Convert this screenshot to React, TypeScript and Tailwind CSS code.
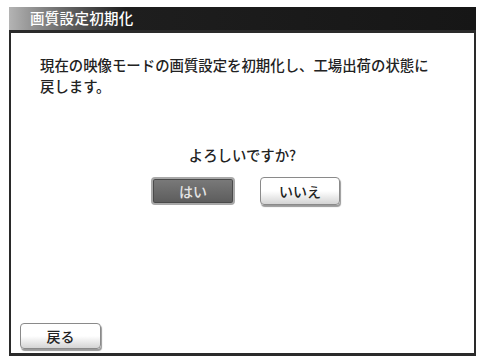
import React from 'react';

const font = { fontFamily: '"Noto Sans CJK JP", "Noto Sans", sans-serif' };

const App = () => {
  return (
    <div className="w-[479px] h-[359px] bg-white pt-[7px] pl-[9px]" style={font}>
      <div className="w-[467px] h-[23px] flex items-center pl-[21px] bg-gradient-to-r from-[#b4b4b4] via-[#1e1e1e] via-[25%] to-[#161616]">
        <span className="text-white text-[14.5px] leading-none tracking-[0.3px] font-medium">画質設定初期化</span>
      </div>
      <div className="w-[467px] h-[326px] border-2 border-[#2a2a2a] border-t-[3px] border-b-[3px] flex flex-col">
        <p className="mt-[21px] ml-[29px] text-[14.4px] leading-[21px] text-[#222] font-medium">
          現在の映像モードの画質設定を初期化し、工場出荷の状態に
          <br />
          戻します。
        </p>
        <p className="mt-[52px] text-center text-[14.4px] leading-none text-[#222] font-medium">よろしいですか?</p>
        <div className="mt-[15px] flex pl-[140px] gap-[25px]">
          <div className="w-[84px] h-[28px] rounded-[4px] border-2 border-[#a8a8a8] bg-gradient-to-b from-[#7a7a7a] to-[#5c5c5c] shadow-[inset_0_0_0_1px_#4a4a4a] flex items-center justify-center text-[#e4e4e4] text-[14px] font-medium">
            はい
          </div>
          <div className="w-[80px] h-[28px] rounded-[4px] border border-[#8a8a8a] bg-gradient-to-b from-white via-white to-[#d4d4d4] shadow-[1px_2px_1px_#9a9a9a] flex items-center justify-center text-[#222] text-[14px] font-medium">
            いいえ
          </div>
        </div>
        <div className="mt-auto mb-[4px] ml-[9px]">
          <div className="w-[81px] h-[26px] rounded-[4px] border border-[#8a8a8a] bg-gradient-to-b from-white via-white to-[#d4d4d4] shadow-[1px_2px_1px_#9a9a9a] flex items-center justify-center text-[#222] text-[14px] font-medium">
            戻る
          </div>
        </div>
      </div>
    </div>
  );
};

export default App;
